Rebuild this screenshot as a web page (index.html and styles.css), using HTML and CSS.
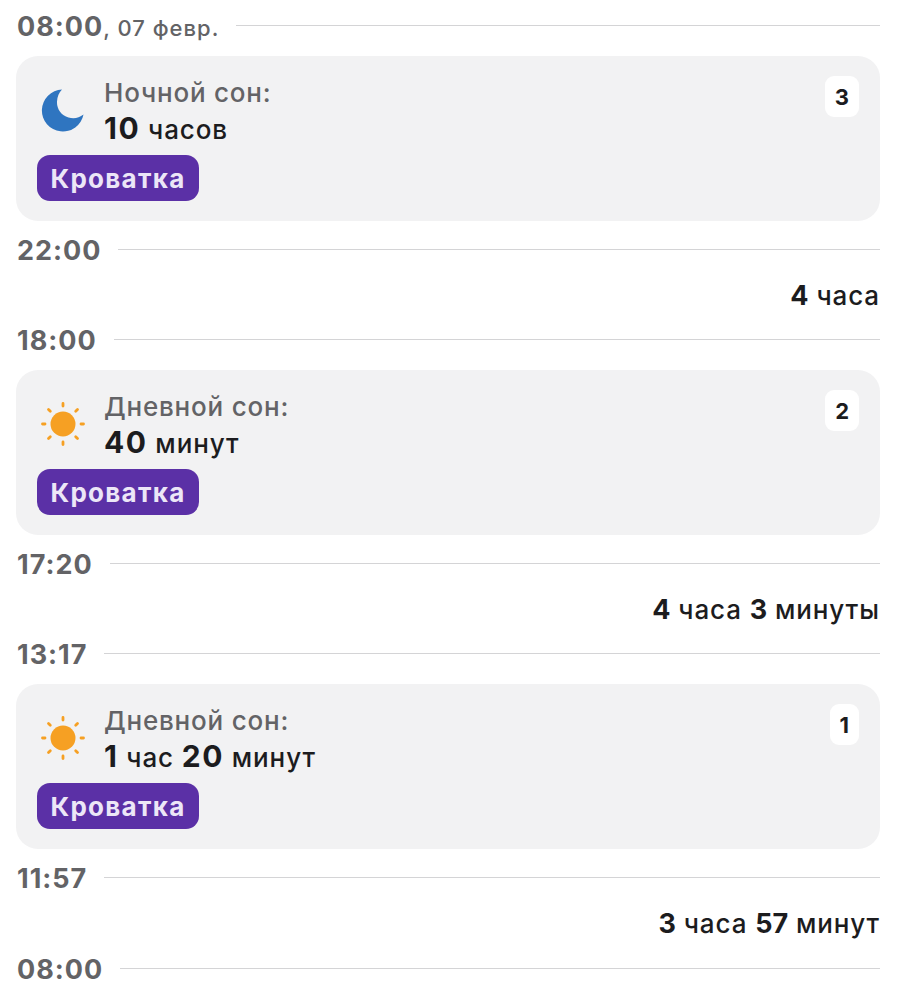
FILE: index.html
```html
<!DOCTYPE html>
<html lang="ru">
<head>
<meta charset="utf-8">
<title>Сон</title>
<link rel="stylesheet" href="styles.css">
</head>
<body>
<main class="timeline">
  <div class="time-row"><span class="time"><b>08:00</b><span class="date">, 07 февр.</span></span><i class="rule"></i></div>
  <section class="card">
    <div class="card-head">
      <svg class="icon" viewBox="0 0 44 44"><path class="moon" d="M21 1.5A21 21 0 1 0 42.5 26.5C38 30 33 31 27.5 29.5C20 27.500 15.500 20.500 16 13.500C16.300 8.500 18 4.500 21 1.500Z"/></svg>
      <div class="text"><div class="title">Ночной сон:</div><div class="value"><b>10</b> часов</div></div>
      <span class="badge">3</span>
    </div>
    <span class="tag">Кроватка</span>
  </section>
  <div class="time-row"><span class="time"><b>22:00</b></span><i class="rule"></i></div>
  <div class="gap"><b>4</b> часа</div>
  <div class="time-row"><span class="time"><b>18:00</b></span><i class="rule"></i></div>
  <section class="card">
    <div class="card-head">
      <svg class="icon" viewBox="0 0 44 44"><use href="#sun"/></svg>
      <div class="text"><div class="title">Дневной сон:</div><div class="value"><b>40</b> минут</div></div>
      <span class="badge">2</span>
    </div>
    <span class="tag">Кроватка</span>
  </section>
  <div class="time-row"><span class="time"><b>17:20</b></span><i class="rule"></i></div>
  <div class="gap"><b>4</b> часа <b>3</b> минуты</div>
  <div class="time-row"><span class="time"><b>13:17</b></span><i class="rule"></i></div>
  <section class="card">
    <div class="card-head">
      <svg class="icon" viewBox="0 0 44 44"><use href="#sun"/></svg>
      <div class="text"><div class="title">Дневной сон:</div><div class="value"><b>1</b> час <b>20</b> минут</div></div>
      <span class="badge">1</span>
    </div>
    <span class="tag">Кроватка</span>
  </section>
  <div class="time-row"><span class="time"><b>11:57</b></span><i class="rule"></i></div>
  <div class="gap"><b>3</b> часа <b>57</b> минут</div>
  <div class="time-row"><span class="time"><b>08:00</b></span><i class="rule"></i></div>
</main>
<svg class="defs" width="0" height="0">
  <symbol id="sun" viewBox="0 0 44 44">
    <circle class="sun-core" cx="22" cy="22" r="12.500"/>
    <g class="sun-rays">
      <path d="M22 1.500v2.500M22 40v2.500M1.500 22H4M40 22h2.500M7.500 7.500l1.800 1.800M34.700 34.700l1.800 1.800M7.500 36.500l1.800-1.800M34.700 9.300l1.800-1.800"/>
    </g>
  </symbol>
</svg>
</body>
</html>
```
FILE: styles.css
```css
* { box-sizing: border-box; }
html, body { margin: 0; background: #fff; }
body { font-family: Inter, "Noto Sans", sans-serif; color: #1c1c1e; }
.timeline { padding: 12px 17px 0 17px; display: flex; flex-direction: column; }
.time-row { display: flex; align-items: center; gap: 17px; height: 28px; }
.time-row:last-child { margin-top: 1px; }
.time { color: #636366; font-size: 17px; white-space: nowrap; }
.time b { font-size: 27px; font-weight: 700; letter-spacing: 1px; }
.date { font-size: 22px; font-weight: 500; letter-spacing: 1px; }
.rule { flex: 1; height: 1px; margin-top: -2px; background: #d4d4d6; }
.card { margin: 16px 0 15px -1px; height: 165px; background: #f2f2f3; border-radius: 22px; padding: 20px 21px 20px 21px; display: flex; flex-direction: column; justify-content: space-between; }
.card-head { display: flex; align-items: flex-start; }
.icon { width: 44px; height: 44px; margin: 12px 0 0 4px; flex: none; }
.moon { fill: #2f75c0; }
.sun-core { fill: #f6a023; }
.sun-rays path { stroke: #f6a023; stroke-width: 2.800; stroke-linecap: round; fill: none; }
.defs { position: absolute; }
.text { margin: -1px 0 0 19px; flex: 1; }
.title { color: #636366; font-size: 26px; font-weight: 500; letter-spacing: 0.8px; line-height: 36px; }
.value { font-size: 26px; font-weight: 500; letter-spacing: 0.9px; line-height: 35px; }
.value b { font-size: 30px; font-weight: 700; letter-spacing: 1.5px; }
.badge { height: 41px; padding: 0 10px; background: #fff; border-radius: 9px; font-size: 22px; font-weight: 700; display: flex; align-items: center; justify-content: center; }
.tag { align-self: flex-start; width: 162px; height: 46px; background: #5b30a6; color: #ece6f7; border-radius: 13px; font-size: 26px; font-weight: 700; display: flex; align-items: center; justify-content: center; letter-spacing: 1.300px; }
.gap { margin: 18px 0 16px; height: 28px; line-height: 28px; text-align: right; font-size: 26px; font-weight: 500; letter-spacing: 0.9px; }
.gap b { font-size: 27px; font-weight: 700; letter-spacing: 0; }
```
